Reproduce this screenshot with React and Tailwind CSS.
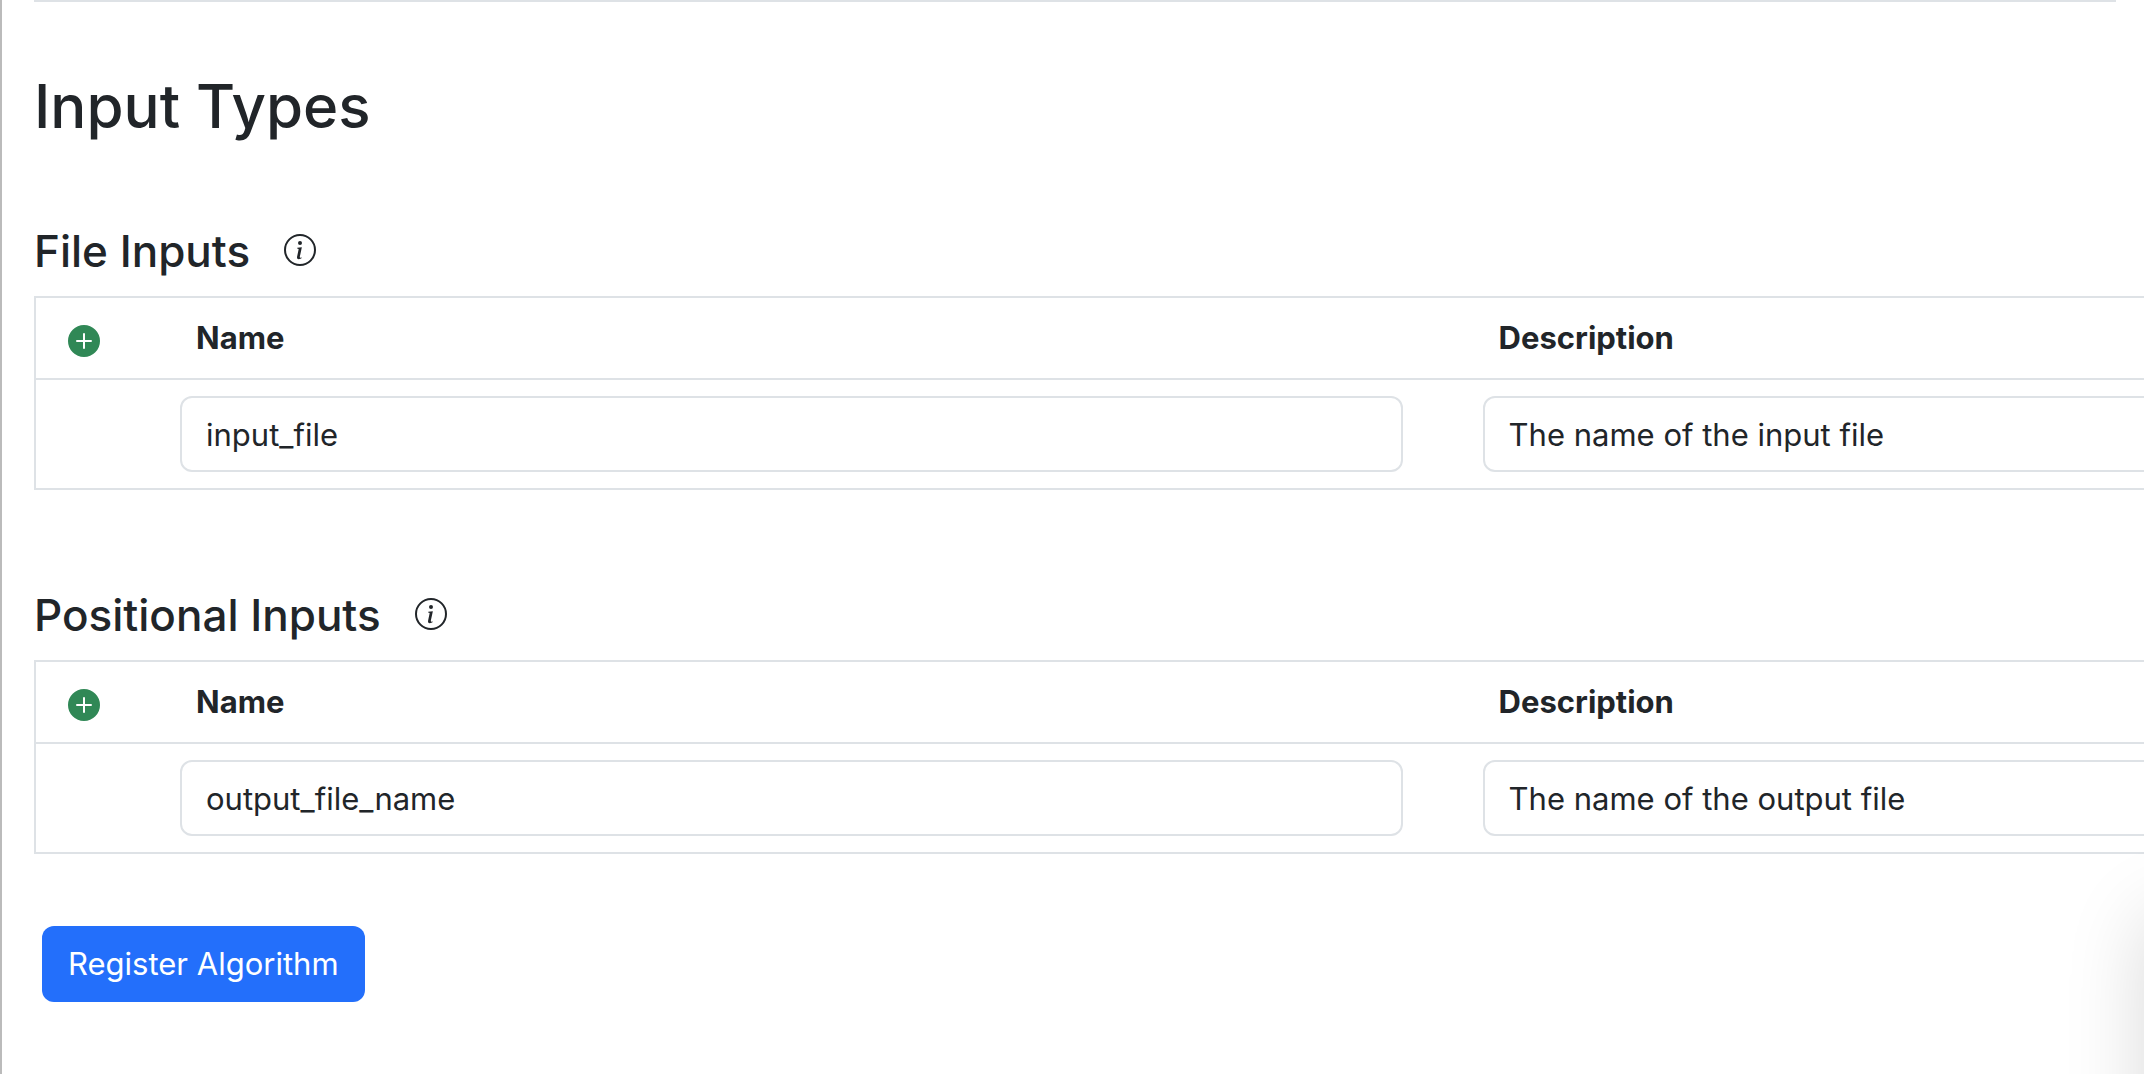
import { BsInfoCircle, BsPlusCircleFill } from "react-icons/bs";

function InputTable({ title, id, name, description }) {
  return (
    <section aria-labelledby={id}>
      <div className="flex h-[58px] items-center gap-[34px]">
        <h2 id={id} className="text-[44px] leading-[58px] font-medium">
          {title}
        </h2>
        <button type="button" aria-label={`About ${title}`} className="-mt-0.5">
          <BsInfoCircle className="size-8" />
        </button>
      </div>
      <table className="mt-4 w-[calc(132%+4px)] table-fixed border-collapse border-2 border-[#dee2e6] text-left text-[31px]">
        <colgroup>
          <col className="w-[145px]" />
          <col />
          <col />
        </colgroup>
        <thead>
          <tr className="h-[82px] border-b-2 border-[#dee2e6]">
            <th className="px-8 py-0">
              <button type="button" aria-label={`Add to ${title}`} className="mt-1.5 block text-[#308856]">
                <BsPlusCircleFill className="size-8" />
              </button>
            </th>
            <th className="px-4 py-0 font-bold">Name</th>
            <th className="px-4 py-0 font-bold">Description</th>
          </tr>
        </thead>
        <tbody>
          <tr className="h-[110px]">
            <td />
            <td className="py-0 pr-20 pl-0">
              <input
                aria-label={`${title} name`}
                defaultValue={name}
                className="block h-[76px] w-full rounded-xl border-2 border-[#dee2e6] bg-white px-6"
              />
            </td>
            <td className="py-0 pr-20 pl-0">
              <input
                aria-label={`${title} description`}
                defaultValue={description}
                className="block h-[76px] w-full rounded-xl border-2 border-[#dee2e6] bg-white px-6"
              />
            </td>
          </tr>
        </tbody>
      </table>
    </section>
  );
}

export default function App() {
  return (
    <main className="relative min-h-screen overflow-hidden border-l-2 border-[#bbbbbb] bg-white pr-7 pl-8 font-['Inter',sans-serif] text-[#212529]">
      <hr className="border-t-2 border-[#dee2e6]" />
      <h1 className="mt-16 text-[60px] leading-[80px] font-medium">Input Types</h1>
      <div className="mt-[76px] flex flex-col gap-24">
        <InputTable
          id="file-inputs"
          title="File Inputs"
          name="input_file"
          description="The name of the input file"
        />
        <InputTable
          id="positional-inputs"
          title="Positional Inputs"
          name="output_file_name"
          description="The name of the output file"
        />
      </div>
      <button
        type="button"
        className="mt-[72px] ml-2 h-[76px] rounded-xl bg-[#236ffb] px-[26px] text-[31px] text-white"
      >
        Register Algorithm
      </button>
      <div className="pointer-events-none absolute -right-40 -bottom-40 h-[320px] w-40 rounded-3xl shadow-[0_0_80px_rgba(0,0,0,0.15)]" />
    </main>
  );
}
